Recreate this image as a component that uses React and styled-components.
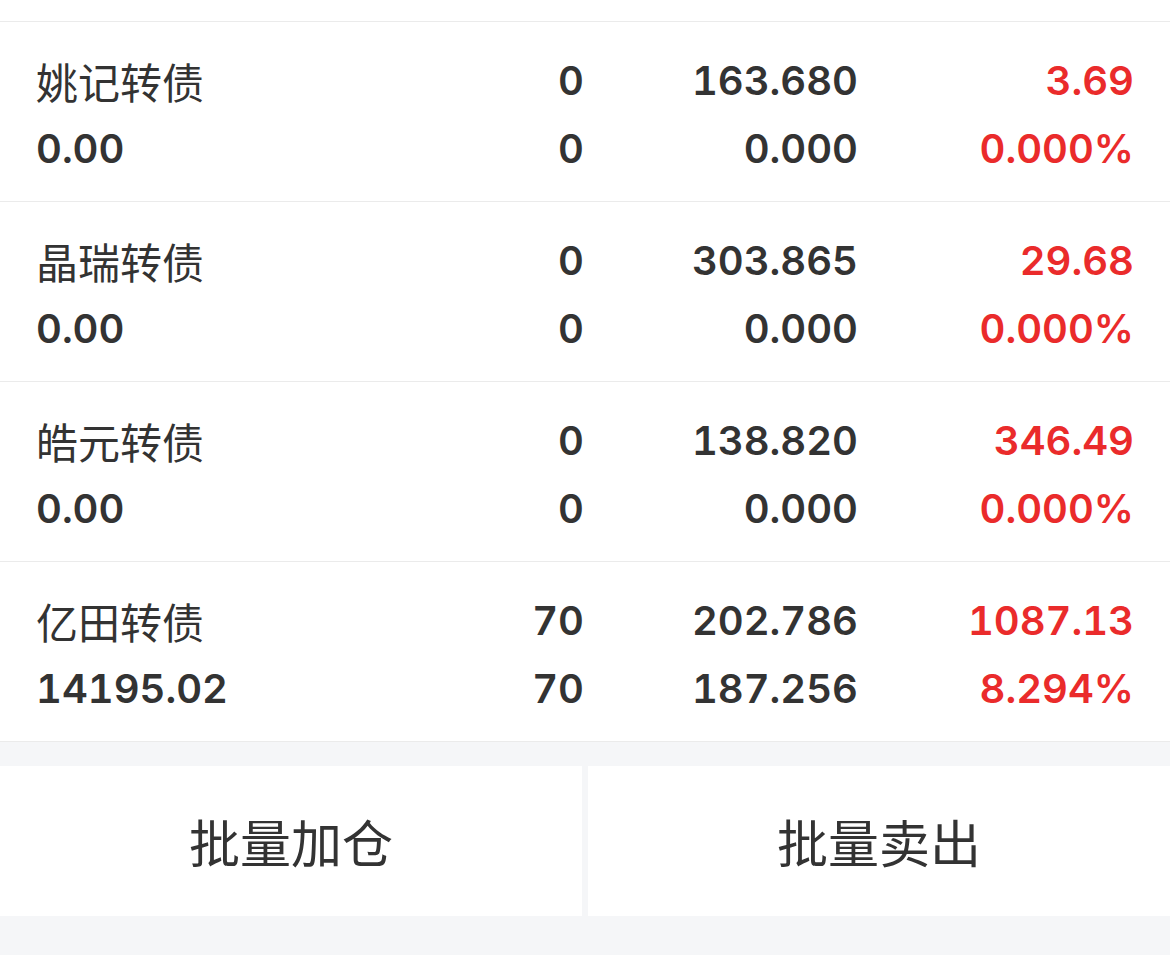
import styled, { createGlobalStyle } from 'styled-components'

const GlobalStyle = createGlobalStyle`
  html, body {
    margin: 0;
    padding: 0;
    background: #f5f6f8;
  }
  body {
    font-family: Inter, 'Noto Sans CJK SC', sans-serif;
    color: #333333;
  }
`

const bonds = [
  { name: '姚记转债', value: '0.00', hold: '0', avail: '0', price: '163.680', cost: '0.000', profit: '3.69', rate: '0.000%' },
  { name: '晶瑞转债', value: '0.00', hold: '0', avail: '0', price: '303.865', cost: '0.000', profit: '29.68', rate: '0.000%' },
  { name: '皓元转债', value: '0.00', hold: '0', avail: '0', price: '138.820', cost: '0.000', profit: '346.49', rate: '0.000%' },
  { name: '亿田转债', value: '14195.02', hold: '70', avail: '70', price: '202.786', cost: '187.256', profit: '1087.13', rate: '8.294%' },
]

function App() {
  return (
    <Page>
      <GlobalStyle />
      <List>
        <TopStrip />
        {bonds.map((b) => (
          <Row key={b.name}>
            <Name>{b.name}</Name>
            <Num>{b.hold}</Num>
            <Num>{b.price}</Num>
            <Num $red>{b.profit}</Num>
            <Num $left>{b.value}</Num>
            <Num>{b.avail}</Num>
            <Num>{b.cost}</Num>
            <Num $red>{b.rate}</Num>
          </Row>
        ))}
      </List>
      <Actions>
        <ActionButton>批量加仓</ActionButton>
        <ActionButton>批量卖出</ActionButton>
      </Actions>
    </Page>
  )
}

export default App

const Page = styled.div`
  width: 1170px;
  height: 955px;
  background: #f5f6f8;
  overflow: hidden;
`

const List = styled.div`
  background: #ffffff;
`

const TopStrip = styled.div`
  height: 21px;
  border-bottom: 1px solid #ebebeb;
`

const Row = styled.div`
  display: grid;
  grid-template-columns: 300px 248px 274px 1fr;
  grid-auto-rows: 68px;
  align-items: center;
  padding: 24px 36px 19px 36px;
  border-bottom: 1px solid #ebebeb;
`

const Name = styled.div`
  font-size: 42px;
  font-weight: 400;
  color: #333333;
  white-space: nowrap;
`

const Num = styled.div`
  font-size: 40px;
  font-weight: 600;
  font-variant-numeric: tabular-nums;
  white-space: nowrap;
  text-align: ${(p) => (p.$left ? 'left' : 'right')};
  color: ${(p) => (p.$red ? '#ea2b2b' : '#333333')};
`

const Actions = styled.div`
  display: grid;
  grid-template-columns: 1fr 1fr;
  gap: 6px;
  margin-top: 24px;
`

const ActionButton = styled.div`
  height: 150px;
  background: #ffffff;
  display: flex;
  align-items: center;
  justify-content: center;
  font-size: 51px;
  color: #333333;
  cursor: pointer;
`
